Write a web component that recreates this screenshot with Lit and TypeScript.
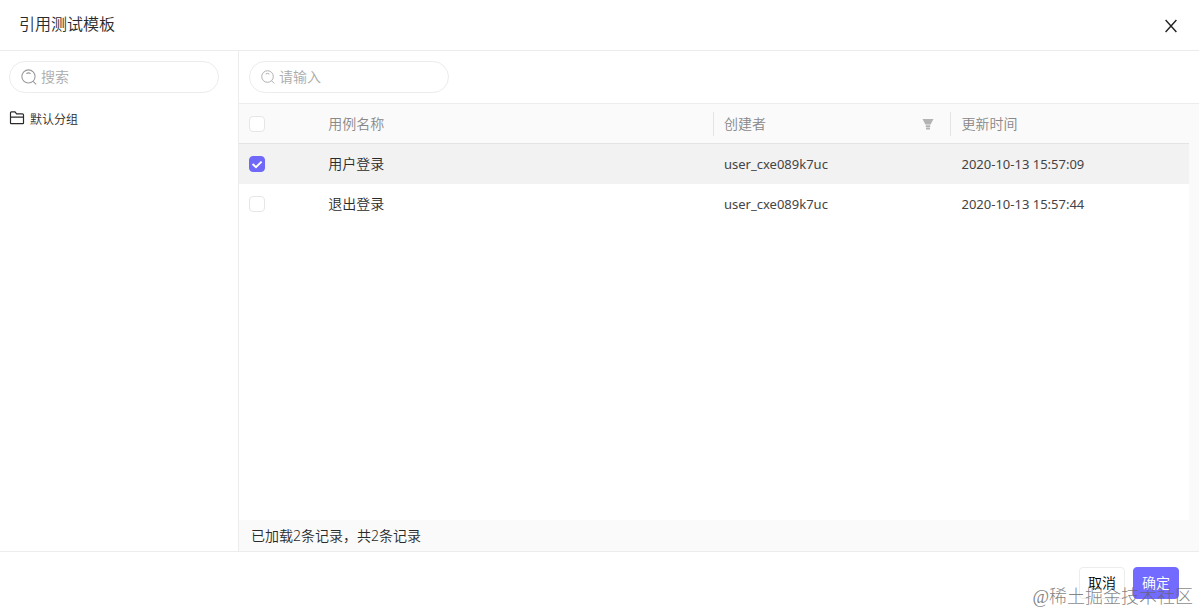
import { LitElement, html, css, svg } from "lit";
import { customElement, state } from "lit/decorators.js";

interface TestCase {
  id: number;
  name: string;
  creator: string;
  updatedAt: string;
}

const searchIcon = svg`
  <circle cx="7" cy="7" r="6.2"></circle>
  <path d="M5 4.4A3.2 3.2 0 0 1 9 4.4M11.4 11.6L14.2 14.4"></path>
`;

@customElement("app-root")
export class AppRoot extends LitElement {
  static styles = css`
    :host {
      display: block;
      font-family: "Noto Sans", "Noto Sans CJK SC", sans-serif;
      font-size: 14px;
      font-weight: 350;
      line-height: 20px;
      color: #2a2a2a;
    }
    * {
      box-sizing: border-box;
    }
    .dialog {
      position: relative;
      display: flex;
      flex-direction: column;
      min-height: 100vh;
      background: #fff;
    }
    .head {
      display: flex;
      align-items: center;
      justify-content: space-between;
      padding: 0 20px 0 19px;
      border-bottom: 1px solid #ececec;
    }
    .title {
      margin: 0;
      padding: 12px 0 14px;
      font-size: 16px;
      line-height: 24px;
      font-weight: inherit;
    }
    .close {
      display: flex;
      padding: 2px 0 0;
      border: 0;
      background: none;
      color: #222;
    }
    svg {
      display: block;
      flex: none;
      fill: none;
      stroke: currentColor;
    }
    .body {
      display: flex;
      flex: 1;
    }
    .side {
      flex: none;
      width: 239px;
      padding: 10px 19px 10px 9px;
      border-right: 1px solid #ececec;
    }
    .search {
      display: flex;
      align-items: center;
      gap: 4px;
      height: 32px;
      padding: 0 11px;
      border: 1px solid #ececec;
      border-radius: 16px;
      color: #999;
    }
    .search input {
      flex: 1;
      min-width: 0;
      padding: 0;
      border: 0;
      outline: 0;
      background: none;
      font: inherit;
      color: #333;
    }
    .search input::placeholder {
      color: #aaa;
      opacity: 1;
    }
    .groups {
      margin: 16px 0 0;
      padding: 0;
      list-style: none;
    }
    .group {
      display: flex;
      align-items: flex-start;
      gap: 5px;
      font-size: 12px;
      line-height: 22px;
    }
    .group svg {
      margin-top: 1px;
    }
    .main {
      display: flex;
      flex: 1;
      flex-direction: column;
      min-width: 0;
    }
    .toolbar {
      padding: 10px;
    }
    .toolbar .search {
      width: 200px;
      color: #aaa;
    }
    .grid {
      display: flex;
      flex: 1;
      flex-direction: column;
      padding-right: 10px;
      border-top: 1px solid #ececec;
      background: #fafafa;
    }
    .sheet {
      flex: 1;
      background: #fff;
    }
    table {
      width: 100%;
      table-layout: fixed;
      border-spacing: 0;
    }
    th,
    td {
      height: 40px;
      padding: 0 0 0 10px;
      text-align: left;
      font-weight: inherit;
    }
    th {
      border-bottom: 1px solid #e4e4e4;
      background: #fafafa;
      color: #888;
    }
    .pick {
      width: calc(100% / 12);
    }
    .name {
      width: calc(500% / 12);
    }
    .quarter {
      width: 25%;
    }
    .latin {
      font-size: 13px;
      font-weight: 400;
      color: #444;
    }
    .cell {
      display: flex;
      align-items: center;
      justify-content: space-between;
      height: 24px;
      padding-right: 16px;
    }
    .split {
      border-right: 1px solid #e4e4e4;
    }
    .chosen td {
      background: #f2f2f2;
    }
    .filter {
      display: flex;
      padding: 0;
      border: 0;
      background: none;
      color: #b3b3b3;
    }
    .filter svg {
      fill: currentColor;
      stroke: none;
    }
    .check {
      display: block;
      width: 16px;
      height: 16px;
      margin: 0;
      appearance: none;
      border: 1px solid #e6e6e6;
      border-radius: 4px;
      background: #fff;
    }
    .check:checked {
      border-color: #6f68f8;
      background: #6f68f8
        url("data:image/svg+xml,%3Csvg xmlns='http://www.w3.org/2000/svg' viewBox='0 0 14 14'%3E%3Cpath d='M2.6 7L6 10.2L11.6 4.6' fill='none' stroke='white' stroke-width='2'/%3E%3C/svg%3E")
        center / 14px 14px no-repeat;
    }
    .status {
      margin: 0;
      padding: 6px 12px 5px;
    }
    .foot {
      display: flex;
      justify-content: flex-end;
      gap: 8px;
      padding: 15px 20px 14px;
      border-top: 1px solid #ececec;
    }
    .btn {
      height: 32px;
      padding: 0 8px;
      border: 1px solid #ececec;
      border-radius: 4px;
      background: #fff;
      font: inherit;
      color: #000;
    }
    .primary {
      border-color: #736bff;
      background: #736bff;
      color: #fff;
    }
    .watermark {
      position: absolute;
      right: 6px;
      bottom: 4px;
      font: 300 18px/24px "Liberation Serif", "Noto Sans CJK SC", serif;
      color: rgba(100, 100, 100, 0.8);
      pointer-events: none;
    }
  `;

  @state() private chosen = new Set<number>([1]);

  private cases: TestCase[] = [
    { id: 1, name: "用户登录", creator: "user_cxe089k7uc", updatedAt: "2020-10-13 15:57:09" },
    { id: 2, name: "退出登录", creator: "user_cxe089k7uc", updatedAt: "2020-10-13 15:57:44" },
  ];

  private toggle(id: number) {
    const next = new Set(this.chosen);
    if (!next.delete(id)) next.add(id);
    this.chosen = next;
  }

  private toggleAll(e: Event) {
    const on = (e.target as HTMLInputElement).checked;
    this.chosen = new Set(on ? this.cases.map((c) => c.id) : []);
  }

  render() {
    const total = this.cases.length;
    return html`
      <div class="dialog">
        <header class="head">
          <h1 class="title">引用测试模板</h1>
          <button class="close" aria-label="关闭">
            <svg width="16" height="16" viewBox="0 0 16 16" stroke-width="1.4">
              <path d="M2.6 2L13.4 14M13.4 2L2.6 14"></path>
            </svg>
          </button>
        </header>
        <div class="body">
          <aside class="side">
            <label class="search">
              <svg width="16" height="16" viewBox="0 0 15 15">${searchIcon}</svg>
              <input type="text" placeholder="搜索" aria-label="搜索" />
            </label>
            <ul class="groups">
              <li class="group">
                <svg width="16" height="16" viewBox="0 0 16 16" stroke-width="1.2">
                  <path d="M2.5 1.8H6L7.6 3.8H13.4Q14.5 3.8 14.5 4.9V13Q14.5 13.6 13.9 13.6H2.1Q1.5 13.6 1.5 13V2.8Q1.5 1.8 2.5 1.8ZM1.5 7.2H14.5"></path>
                </svg>
                默认分组
              </li>
            </ul>
          </aside>
          <main class="main">
            <div class="toolbar">
              <label class="search">
                <svg width="14" height="14" viewBox="0 0 15 15">${searchIcon}</svg>
                <input type="text" placeholder="请输入" aria-label="请输入" />
              </label>
            </div>
            <div class="grid">
              <div class="sheet">
                <table>
                  <thead>
                    <tr>
                      <th class="pick">
                        <input
                          class="check"
                          type="checkbox"
                          aria-label="全选"
                          .checked=${this.chosen.size === total}
                          @change=${this.toggleAll}
                        />
                      </th>
                      <th class="name"><div class="cell split">用例名称</div></th>
                      <th class="quarter">
                        <div class="cell split">
                          创建者
                          <button class="filter" aria-label="筛选">
                            <svg width="12" height="12" viewBox="0 0 12 12">
                              <path d="M0.5 1H11.5L8.6 6.6H3.4ZM3.8 7.2H8.2V9H3.8ZM4 9.4H8V11.4H4Z"></path>
                            </svg>
                          </button>
                        </div>
                      </th>
                      <th class="quarter">更新时间</th>
                    </tr>
                  </thead>
                  <tbody>
                    ${this.cases.map(
                      (c) => html`
                        <tr class=${this.chosen.has(c.id) ? "chosen" : ""}>
                          <td>
                            <input
                              class="check"
                              type="checkbox"
                              aria-label=${c.name}
                              .checked=${this.chosen.has(c.id)}
                              @change=${() => this.toggle(c.id)}
                            />
                          </td>
                          <td>${c.name}</td>
                          <td class="latin">${c.creator}</td>
                          <td class="latin">${c.updatedAt}</td>
                        </tr>
                      `,
                    )}
                  </tbody>
                </table>
              </div>
              <p class="status">已加载${total}条记录，共${total}条记录</p>
            </div>
          </main>
        </div>
        <footer class="foot">
          <button class="btn">取消</button>
          <button class="btn primary">确定</button>
        </footer>
        <div class="watermark">@稀土掘金技术社区</div>
      </div>
    `;
  }
}
